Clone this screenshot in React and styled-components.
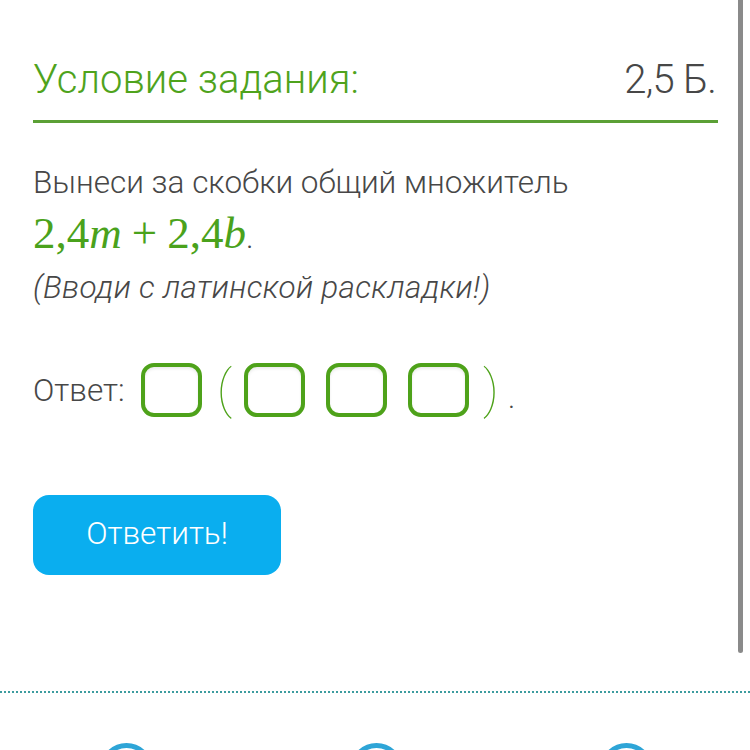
import React from 'react';
import styled, { createGlobalStyle } from 'styled-components';

const Global = createGlobalStyle`
    html, body {
        margin: 0;
        padding: 0;
        background: #fff;
        overflow: hidden;
    }
    body {
        font-family: Roboto, "Liberation Sans", sans-serif;
        font-weight: 300;
        color: #474747;
    }
`;

const Page = styled.div`
    position: relative;
    width: 750px;
    height: 750px;
    overflow: hidden;
`;

const Task = styled.div`
    padding: 60px 32px 0 33px;
`;

const Header = styled.div`
    display: flex;
    justify-content: space-between;
    align-items: baseline;
    font-size: 40px;
    line-height: 40px;
    padding-bottom: 20px;
    border-bottom: 3px solid #5ba035;
`;

const Title = styled.div`
    color: #4fa31c;
`;

const Points = styled.div`
    color: #474747;
    padding-right: 2px;
    letter-spacing: -0.8px;
`;

const Text = styled.div`
    margin-top: 35px;
    font-size: 31.5px;
    line-height: 50px;
`;

const Line = styled.div`
    font-style: ${(p) => (p.italic ? 'italic' : 'normal')};
    letter-spacing: ${(p) => (p.italic ? '0.3px' : '0')};
`;

const MathExpr = styled.span`
    font-family: "Liberation Serif", "DejaVu Serif", serif;
    font-size: 45px;
    color: #4aa21c;
    font-weight: 400;
`;

const Var = styled.i`
    font-style: italic;
`;

const Op = styled.span`
    margin: 0 10px;
`;

const Answer = styled.div`
    display: flex;
    align-items: center;
    margin-top: 50px;
    height: 54px;
    font-size: 31.5px;
`;

const Label = styled.span`
    margin-right: 16px;
`;

const Cell = styled.div`
    box-sizing: border-box;
    width: 61px;
    height: 54px;
    border: 4px solid #4ea21a;
    border-radius: 13px;
    box-shadow: inset 0 2px 3px rgba(0, 0, 0, 0.08);
    margin-right: ${(p) => p.gap}px;
`;

const Paren = styled.span`
    font-size: 52px;
    font-weight: 100;
    color: #4ea21a;
    line-height: 54px;
    margin-right: ${(p) => p.gap}px;
`;

const Dot = styled.span`
    font-size: 30px;
    margin-top: 14px;
`;

const Button = styled.button`
    display: block;
    margin-top: 78px;
    width: 248px;
    height: 80px;
    border: none;
    border-radius: 16px;
    background: #0aaeef;
    color: #fff;
    font-family: Roboto, "Liberation Sans", sans-serif;
    font-weight: 300;
    font-size: 31.5px;
    padding: 0 0 4px;
    cursor: pointer;
`;

const Separator = styled.div`
    margin-top: 116px;
    border-top: 2px dotted #3d9c9f;
`;

const Icons = styled.div`
    display: flex;
    padding: 50px 0 0 100px;
    gap: 197px;
`;

const Scrollbar = styled.div`
    position: absolute;
    top: 0;
    left: 738px;
    width: 5px;
    height: 653px;
    background: #8a8a8a;
    border-radius: 0 0 3px 3px;
`;

function Ring() {
    return (
        <svg width="53" height="53" viewBox="0 0 53 53">
            <circle cx="26.5" cy="26.5" r="24" fill="none" stroke="#2ea5d7" strokeWidth="5" />
        </svg>
    );
}

export default function App() {
    return (
        <Page>
            <Global />
            <Task>
                <Header>
                    <Title>Условие задания:</Title>
                    <Points>2,5 Б.</Points>
                </Header>
                <Text>
                    <Line>Вынеси за скобки общий множитель</Line>
                    <Line>
                        <MathExpr>
                            2,4<Var>m</Var>
                            <Op>+</Op>
                            2,4<Var>b</Var>
                        </MathExpr>
                        .
                    </Line>
                    <Line italic>(Вводи с латинской раскладки!)</Line>
                </Text>
                <Answer>
                    <Label>Ответ:</Label>
                    <Cell gap={15} />
                    <Paren gap={12}>(</Paren>
                    <Cell gap={21} />
                    <Cell gap={21} />
                    <Cell gap={14} />
                    <Paren gap={9}>)</Paren>
                    <Dot>.</Dot>
                </Answer>
                <Button>Ответить!</Button>
            </Task>
            <Separator />
            <Icons>
                <Ring />
                <Ring />
                <Ring />
            </Icons>
            <Scrollbar />
        </Page>
    );
}
